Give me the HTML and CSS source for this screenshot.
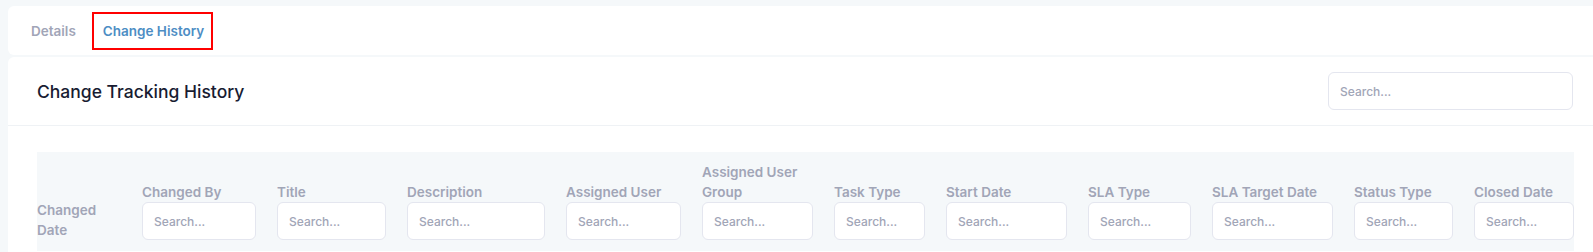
FILE: index.html
```html
<!DOCTYPE html>
<html lang="en">
<head>
    <meta charset="UTF-8">
    <meta name="viewport" content="width=device-width, initial-scale=1.0">
    <title>Change History</title>
    <link rel="stylesheet" href="styles.css">
</head>
<body>
    <div class="page">
        <div class="tabs-card">
            <a class="tab">Details</a>
            <a class="tab active">Change History</a>
        </div>

        <div class="card">
            <div class="card-header">
                <h3 class="card-title">Change Tracking History</h3>
                <input type="text" class="search global-search" placeholder="Search...">
            </div>

            <div class="card-body">
                <div class="filter-row">
                    <div class="filter-cell">
                        <span class="filter-label">Changed<br>Date</span>
                    </div>
                    <div class="filter-cell">
                        <span class="filter-label">Changed By</span>
                        <input type="text" class="search" placeholder="Search...">
                    </div>
                    <div class="filter-cell">
                        <span class="filter-label">Title</span>
                        <input type="text" class="search" placeholder="Search...">
                    </div>
                    <div class="filter-cell">
                        <span class="filter-label">Description</span>
                        <input type="text" class="search" placeholder="Search...">
                    </div>
                    <div class="filter-cell">
                        <span class="filter-label">Assigned User</span>
                        <input type="text" class="search" placeholder="Search...">
                    </div>
                    <div class="filter-cell">
                        <span class="filter-label">Assigned User<br>Group</span>
                        <input type="text" class="search" placeholder="Search...">
                    </div>
                    <div class="filter-cell">
                        <span class="filter-label">Task Type</span>
                        <input type="text" class="search" placeholder="Search...">
                    </div>
                    <div class="filter-cell">
                        <span class="filter-label">Start Date</span>
                        <input type="text" class="search" placeholder="Search...">
                    </div>
                    <div class="filter-cell">
                        <span class="filter-label">SLA Type</span>
                        <input type="text" class="search" placeholder="Search...">
                    </div>
                    <div class="filter-cell">
                        <span class="filter-label">SLA Target Date</span>
                        <input type="text" class="search" placeholder="Search...">
                    </div>
                    <div class="filter-cell">
                        <span class="filter-label">Status Type</span>
                        <input type="text" class="search" placeholder="Search...">
                    </div>
                    <div class="filter-cell">
                        <span class="filter-label">Closed Date</span>
                        <input type="text" class="search" placeholder="Search...">
                    </div>
                </div>
            </div>
        </div>
    </div>
</body>
</html>
```

FILE: styles.css
```css
body {
    font-family: Inter, 'Noto Sans', sans-serif;
    margin: 0;
    background-color: #f5f8fa;
    color: #181c32;
    overflow: hidden;
}

.page {
    padding: 6px 0 0 8px;
}

.tabs-card {
    width: calc(100% + 9px);
    height: 49px;
    display: flex;
    align-items: center;
    gap: 7px;
    padding-left: 14px;
    box-sizing: border-box;
    background-color: #fff;
    border-radius: 6px 0 0 6px;
}

.tab {
    height: 38px;
    display: flex;
    align-items: center;
    padding: 0 9px;
    font-size: 13.5px;
    font-weight: 600;
    color: #a1a5b7;
    cursor: pointer;
    box-sizing: border-box;
}

    .tab.active {
        color: #4d8dc4;
        border: 2px solid #ff0000;
        padding: 0 7px 0 9px;
    }

.card {
    width: calc(100% + 9px);
    margin-top: 2px;
    background-color: #fff;
    border-radius: 6px 0 0 0;
    min-height: 200px;
}

.card-header {
    height: 68px;
    display: flex;
    align-items: center;
    justify-content: space-between;
    padding: 0 29px;
    border-bottom: 1px solid #eff2f5;
}

.card-title {
    margin: 0;
    font-size: 17.5px;
    font-weight: 500;
    color: #181c32;
}

.search {
    height: 38px;
    width: 100%;
    padding: 0 11px;
    box-sizing: border-box;
    border: 1px solid #e4e6ef;
    border-radius: 6px;
    background-color: #fff;
    font-family: inherit;
    font-size: 12px;
    font-weight: 500;
    color: #5e6278;
    outline: none;
}

    .search::placeholder {
        color: #a1a5b7;
    }

.global-search {
    width: 245px;
}

.card-body {
    padding: 26px 28px 0 29px;
}

.filter-row {
    display: grid;
    grid-template-columns: 84px 114px 109px 138px 115px 111px 91px 121px 103px 121px 99px 100px;
    column-gap: 21px;
    align-items: end;
    padding: 10px 0 11px 0;
    background-color: #f5f8fa;
}

.filter-cell {
    display: flex;
    flex-direction: column;
}

.filter-label {
    font-size: 13.5px;
    font-weight: 600;
    line-height: 20px;
    color: #a1a5b7;
    white-space: nowrap;
}
```
